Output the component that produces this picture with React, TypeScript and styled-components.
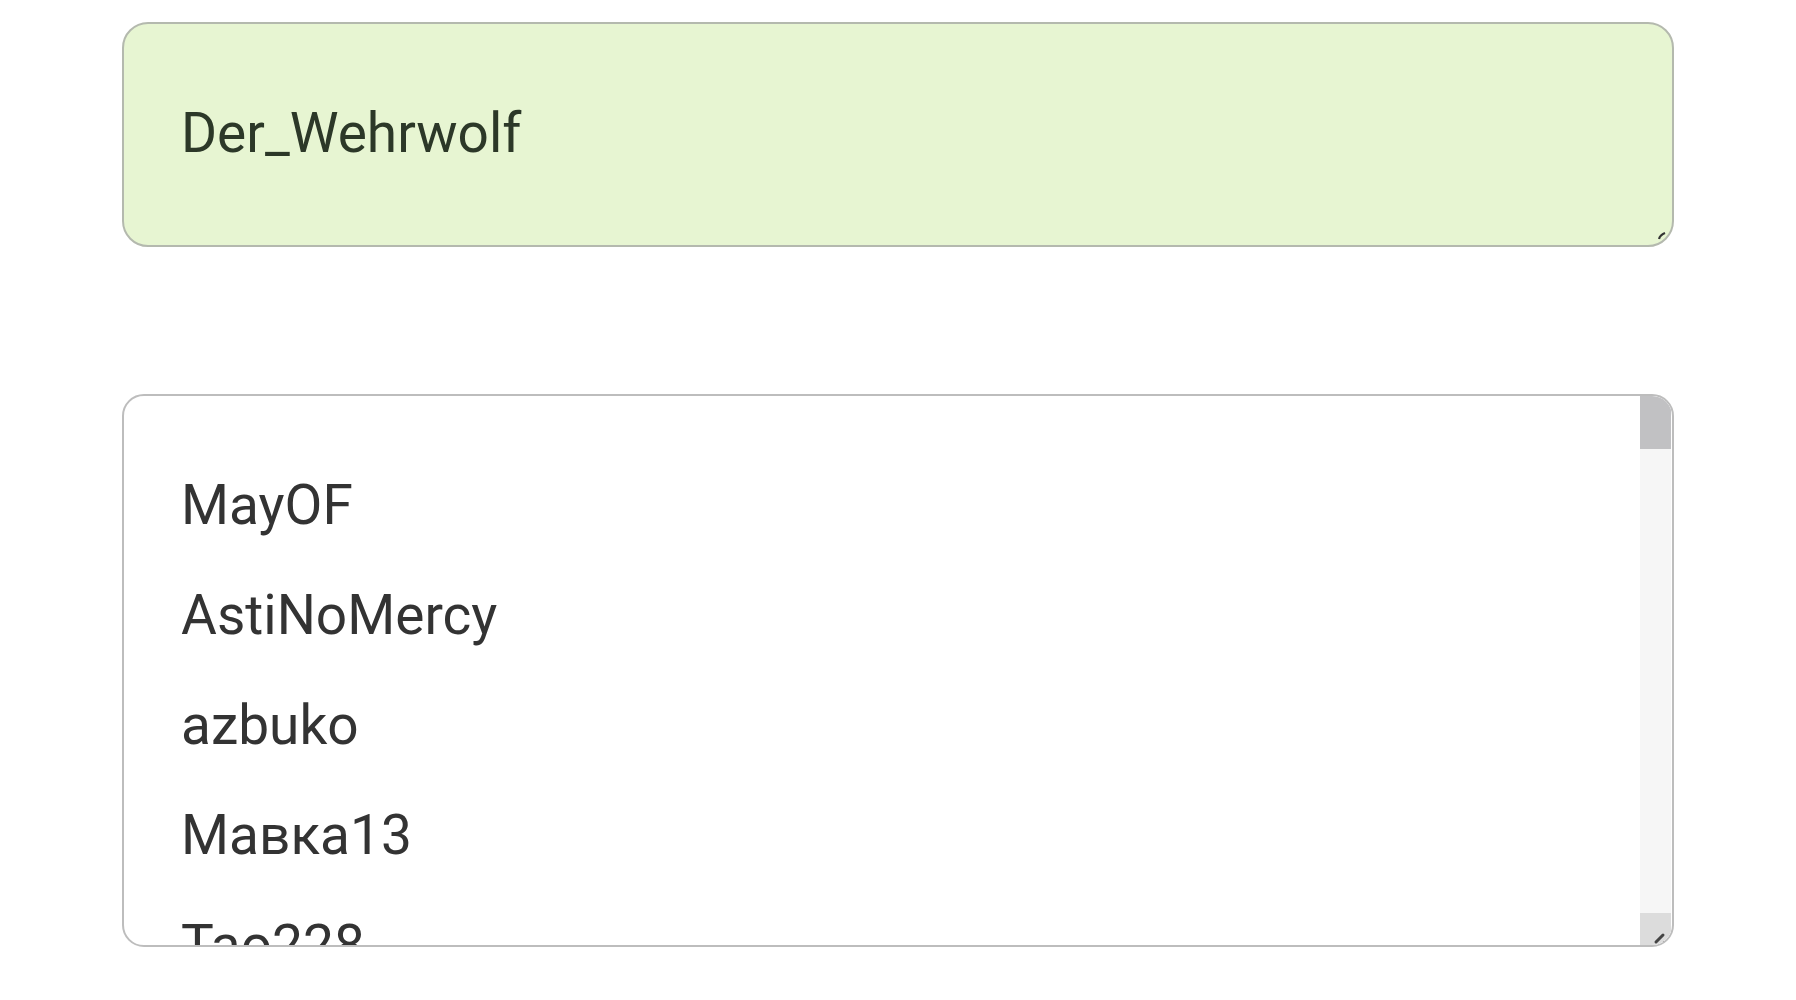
import React from 'react';
import styled, { createGlobalStyle } from 'styled-components';

const GlobalStyle = createGlobalStyle`
  body {
    margin: 0;
    background: #ffffff;
    font-family: Roboto, "Noto Sans", Arial, sans-serif;
  }
`;

const Page = styled.div`
  display: flex;
  flex-direction: column;
  gap: 147px;
  padding: 22px 122px 0 122px;
`;

const NameBox = styled.div`
  position: relative;
  display: flex;
  align-items: center;
  box-sizing: border-box;
  height: 225px;
  padding: 0 58px 4px 57px;
  border: 2px solid #b4b9ae;
  border-radius: 26px;
  background-color: #e7f5d2;
  color: #2c3828;
  font-size: 55px;
`;

const Grip = styled.span`
  position: absolute;
  right: 6px;
  bottom: 5px;
  display: flex;
  width: 8px;
  height: 8px;
  line-height: 0;
`;

const ListBox = styled.div`
  display: flex;
  box-sizing: border-box;
  height: 553px;
  border: 2px solid #bdbdbd;
  border-radius: 22px;
  overflow: hidden;
  background: #ffffff;
`;

const Items = styled.div`
  flex: 1;
  padding: 54px 0 0 57px;
  overflow: hidden;
`;

const Item = styled.div`
  font-size: 55px;
  line-height: 110px;
  color: #333333;
  white-space: nowrap;
`;

const Scrollbar = styled.div`
  display: flex;
  flex-direction: column;
  width: 31px;
  margin-right: 1px;
  background-color: #f6f6f6;
`;

const Thumb = styled.div`
  height: 53px;
  background-color: #c1c1c3;
`;

const Track = styled.div`
  flex: 1;
`;

const Corner = styled.div`
  display: flex;
  align-items: flex-end;
  justify-content: flex-end;
  height: 32px;
  background-color: #dcdcdc;
`;

const names = ['MayOF', 'AstiNoMercy', 'azbuko', 'Мавка13', 'Tao228', 'Kritik', 'Snowy'];

function App() {
  return (
    <>
      <GlobalStyle />
      <Page>
        <NameBox>
          Der_Wehrwolf
          <Grip>
            <svg width="8" height="8" viewBox="0 0 8 8">
              <path d="M1 7 Q2 3 7 1" stroke="#333" strokeWidth="2.2" fill="none" />
            </svg>
          </Grip>
        </NameBox>
        <ListBox>
          <Items>
            {names.map((n) => (
              <Item key={n}>{n}</Item>
            ))}
          </Items>
          <Scrollbar>
            <Thumb />
            <Track />
            <Corner>
              <svg width="18" height="16" viewBox="0 0 18 16">
                <path d="M3 13 L10 6" stroke="#444" strokeWidth="3" strokeLinecap="round" />
                <path d="M10 13 L13 13" stroke="#666" strokeWidth="2" />
              </svg>
            </Corner>
          </Scrollbar>
        </ListBox>
      </Page>
    </>
  );
}

export default App;
